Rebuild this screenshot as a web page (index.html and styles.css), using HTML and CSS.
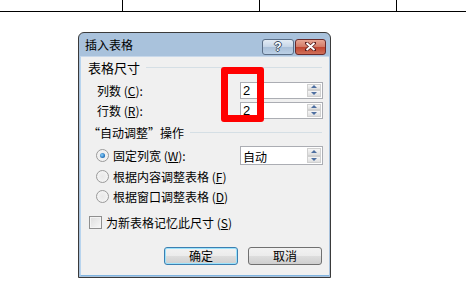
FILE: index.html
```html
<!DOCTYPE html>
<html lang="zh-CN">
<head>
  <meta charset="UTF-8">
  <title>插入表格</title>
  <link rel="stylesheet" href="styles.css">
</head>
<body>

  <div class="sheet">
    <div class="cell first"></div>
    <div class="cell"></div>
    <div class="cell"></div>
    <div class="cell last"></div>
  </div>

  <div class="dialog">
    <div class="titlebar">
      <span class="title">插入表格</span>
      <div class="caption-btns">
        <span class="cap help">?</span>
        <span class="cap close">
          <svg width="11" height="9" viewBox="0 0 11 9">
            <path d="M1.5 1 L9.5 8 M9.5 1 L1.5 8" stroke="#5a1c1c" stroke-width="3.4" stroke-linecap="square"/>
            <path d="M1.5 1 L9.5 8 M9.5 1 L1.5 8" stroke="#ffffff" stroke-width="2"/>
          </svg>
        </span>
      </div>
    </div>

    <div class="content">
      <div class="group first-group"><span>表格尺寸</span><i class="rule"></i></div>

      <div class="row field r1">
        <span class="label">列数 (<u>C</u>):</span>
        <div class="spin"><span class="val">2</span><div class="spin-btns"><i class="up"></i><i class="down"></i></div></div>
      </div>
      <div class="row field r2">
        <span class="label">行数 (<u>R</u>):</span>
        <div class="spin"><span class="val">2</span><div class="spin-btns"><i class="up"></i><i class="down"></i></div></div>
      </div>

      <div class="group second-group"><span>“自动调整”操作</span><i class="rule"></i></div>

      <div class="row opt o1">
        <span class="radio checked"></span>
        <span class="opt-text">固定列宽 (<u>W</u>):</span>
        <div class="spin tall"><span class="val">自动</span><div class="spin-btns"><i class="up"></i><i class="down"></i></div></div>
      </div>
      <div class="row opt o2">
        <span class="radio"></span>
        <span class="opt-text">根据内容调整表格 (<u>F</u>)</span>
      </div>
      <div class="row opt o3">
        <span class="radio"></span>
        <span class="opt-text">根据窗口调整表格 (<u>D</u>)</span>
      </div>

      <div class="row check-row">
        <span class="checkbox"></span>
        <span class="opt-text">为新表格记忆此尺寸 (<u>S</u>)</span>
      </div>

      <div class="actions">
        <span class="btn default">确定</span>
        <span class="btn">取消</span>
      </div>
    </div>
  </div>

  <div class="mark"></div>

</body>
</html>
```

FILE: styles.css
```css
* {
  margin: 0;
  padding: 0;
  box-sizing: border-box;
}

body {
  font-family: "Noto Sans CJK SC", "Liberation Sans", sans-serif;
  font-size: 12px;
  color: #000;
  background-color: #ffffff;
  width: 466px;
  height: 300px;
  overflow: hidden;
  position: relative;
}

u {
  text-decoration: underline;
}

/* the word table behind the dialog */
.sheet {
  display: flex;
  height: 12px;
  border-bottom: 1px solid #000;
}

.cell {
  width: 137px;
  border-right: 1px solid #000;
}

.cell.first {
  width: 123px;
}

.cell.last {
  flex: 1;
  border-right: none;
}

/* dialog frame */
.dialog {
  width: 253px;
  height: 246px;
  margin-left: 78px;
  margin-top: 20px;
  border: 1px solid #3a3a3a;
  border-radius: 6px 6px 0 0;
  background-color: #a9c2dc;
  padding: 0 1px 1px;
  display: flex;
  flex-direction: column;
}

.titlebar {
  height: 23px;
  display: flex;
  align-items: center;
  justify-content: space-between;
  padding-left: 5px;
  padding-right: 3px;
}

.title {
  font-size: 12px;
  line-height: 14px;
  margin-top: 1px;
}

.caption-btns {
  display: flex;
  gap: 1px;
  margin-top: 4px;
}

.cap {
  height: 16px;
  border: 1px solid #5b6e86;
  border-radius: 3px;
  display: flex;
  align-items: center;
  justify-content: center;
}

.help {
  width: 32px;
  background: linear-gradient(#e4ecf5 0%, #c5d5e7 50%, #a9bfd8 51%, #bcd0e6 100%);
  color: #fff;
  font-family: "Liberation Sans", sans-serif;
  font-weight: bold;
  font-size: 12px;
  text-shadow: 1px 0 #3b4d63, -1px 0 #3b4d63, 0 1px #3b4d63, 0 -1px #3b4d63;
}

.close {
  width: 31px;
  border-color: #6a2a2a;
  background: linear-gradient(#e8a593 0%, #d27a66 50%, #c0442e 51%, #d0705a 100%);
}

.content {
  flex: 1;
  background-color: #f0f0f0;
  border-top: 1px solid #c8d8ea;
  border-bottom: 1px solid #7fb4e0;
  border-left: 1px solid #b8d4ee;
  display: flex;
  flex-direction: column;
}

/* group headings */
.group {
  display: flex;
  align-items: center;
  height: 14px;
  padding-left: 7px;
  padding-right: 7px;
  gap: 6px;
}

.first-group {
  margin-top: 3px;
}

.first-group span {
  font-size: 13px;
}

.second-group {
  margin-top: 6px;
}

.rule {
  flex: 1;
  height: 1px;
  background-color: #d5dfe5;
}

.row {
  display: flex;
  align-items: center;
  height: 18px;
}

.field {
  padding-left: 16px;
  padding-right: 6px;
}

.r1 {
  margin-top: 7px;
}

.r2 {
  margin-top: 2px;
}

.label {
  flex: 1;
}

/* spin boxes */
.spin {
  width: 83px;
  height: 17px;
  border: 1px solid #abadb3;
  background-color: #fff;
  display: flex;
  align-items: center;
  justify-content: space-between;
  padding-left: 2px;
}

.spin.tall {
  height: 19px;
}

.val {
  font-family: "Liberation Sans", "Noto Sans CJK SC", sans-serif;
  font-size: 13px;
  line-height: 14px;
  margin-top: 1px;
}

.spin.tall .val {
  font-family: "Noto Sans CJK SC", sans-serif;
  font-size: 12px;
  margin-top: 2px;
}

.spin-btns {
  width: 16px;
  height: 100%;
  display: flex;
  flex-direction: column;
  padding: 1px;
}

.spin-btns i {
  flex: 1;
  display: flex;
  align-items: center;
  justify-content: center;
  background: linear-gradient(#f6f6f6, #dedede);
  border: 1px solid #d0d0d0;
}

.spin-btns i::before {
  content: "";
  border-left: 3px solid transparent;
  border-right: 3px solid transparent;
}

.spin-btns .up::before {
  border-bottom: 3px solid #4e6fa0;
}

.spin-btns .down::before {
  border-top: 3px solid #4e6fa0;
}

/* radio options */
.opt {
  padding-left: 15px;
  padding-right: 6px;
  gap: 4px;
}

.o1 {
  margin-top: 7px;
  height: 19px;
}

.o2 {
  margin-top: 2px;
}

.o3 {
  margin-top: 2px;
}

.opt-text {
  flex: 1;
}

.radio {
  width: 13px;
  height: 13px;
  border-radius: 50%;
  border: 1px solid #9a9a9a;
  background: radial-gradient(circle, #e8e8e8 0%, #f8f8f8 100%);
  display: flex;
  align-items: center;
  justify-content: center;
}

.radio.checked::before {
  content: "";
  width: 5px;
  height: 5px;
  border-radius: 50%;
  background: radial-gradient(circle at 40% 40%, #8bd3ff 0%, #1c6ab4 70%, #124a88 100%);
}

.check-row {
  margin-top: 8px;
  padding-left: 8px;
  gap: 4px;
}

.checkbox {
  width: 13px;
  height: 13px;
  border: 1px solid #8f8f8f;
  background: linear-gradient(135deg, #dcdcdc, #f8f8f8);
  box-shadow: inset 0 0 0 1px #f4f4f4;
}

/* bottom buttons */
.actions {
  display: flex;
  justify-content: flex-end;
  gap: 10px;
  margin-top: 16px;
  padding-right: 7px;
}

.btn {
  width: 74px;
  height: 18px;
  border: 1px solid #707070;
  border-radius: 3px;
  background: linear-gradient(#f2f2f2 0%, #ebebeb 50%, #dddddd 51%, #cfcfcf 100%);
  display: flex;
  align-items: center;
  justify-content: center;
  line-height: 14px;
}

.btn.default {
  border-color: #3c7fb1;
  box-shadow: inset 0 0 0 1px #9ce3fc;
}

/* red highlight drawn over the screenshot */
.mark {
  position: absolute;
  left: 221px;
  top: 67px;
  width: 43px;
  height: 55px;
  border: 7px solid #ff0000;
  border-radius: 3px;
}
```
